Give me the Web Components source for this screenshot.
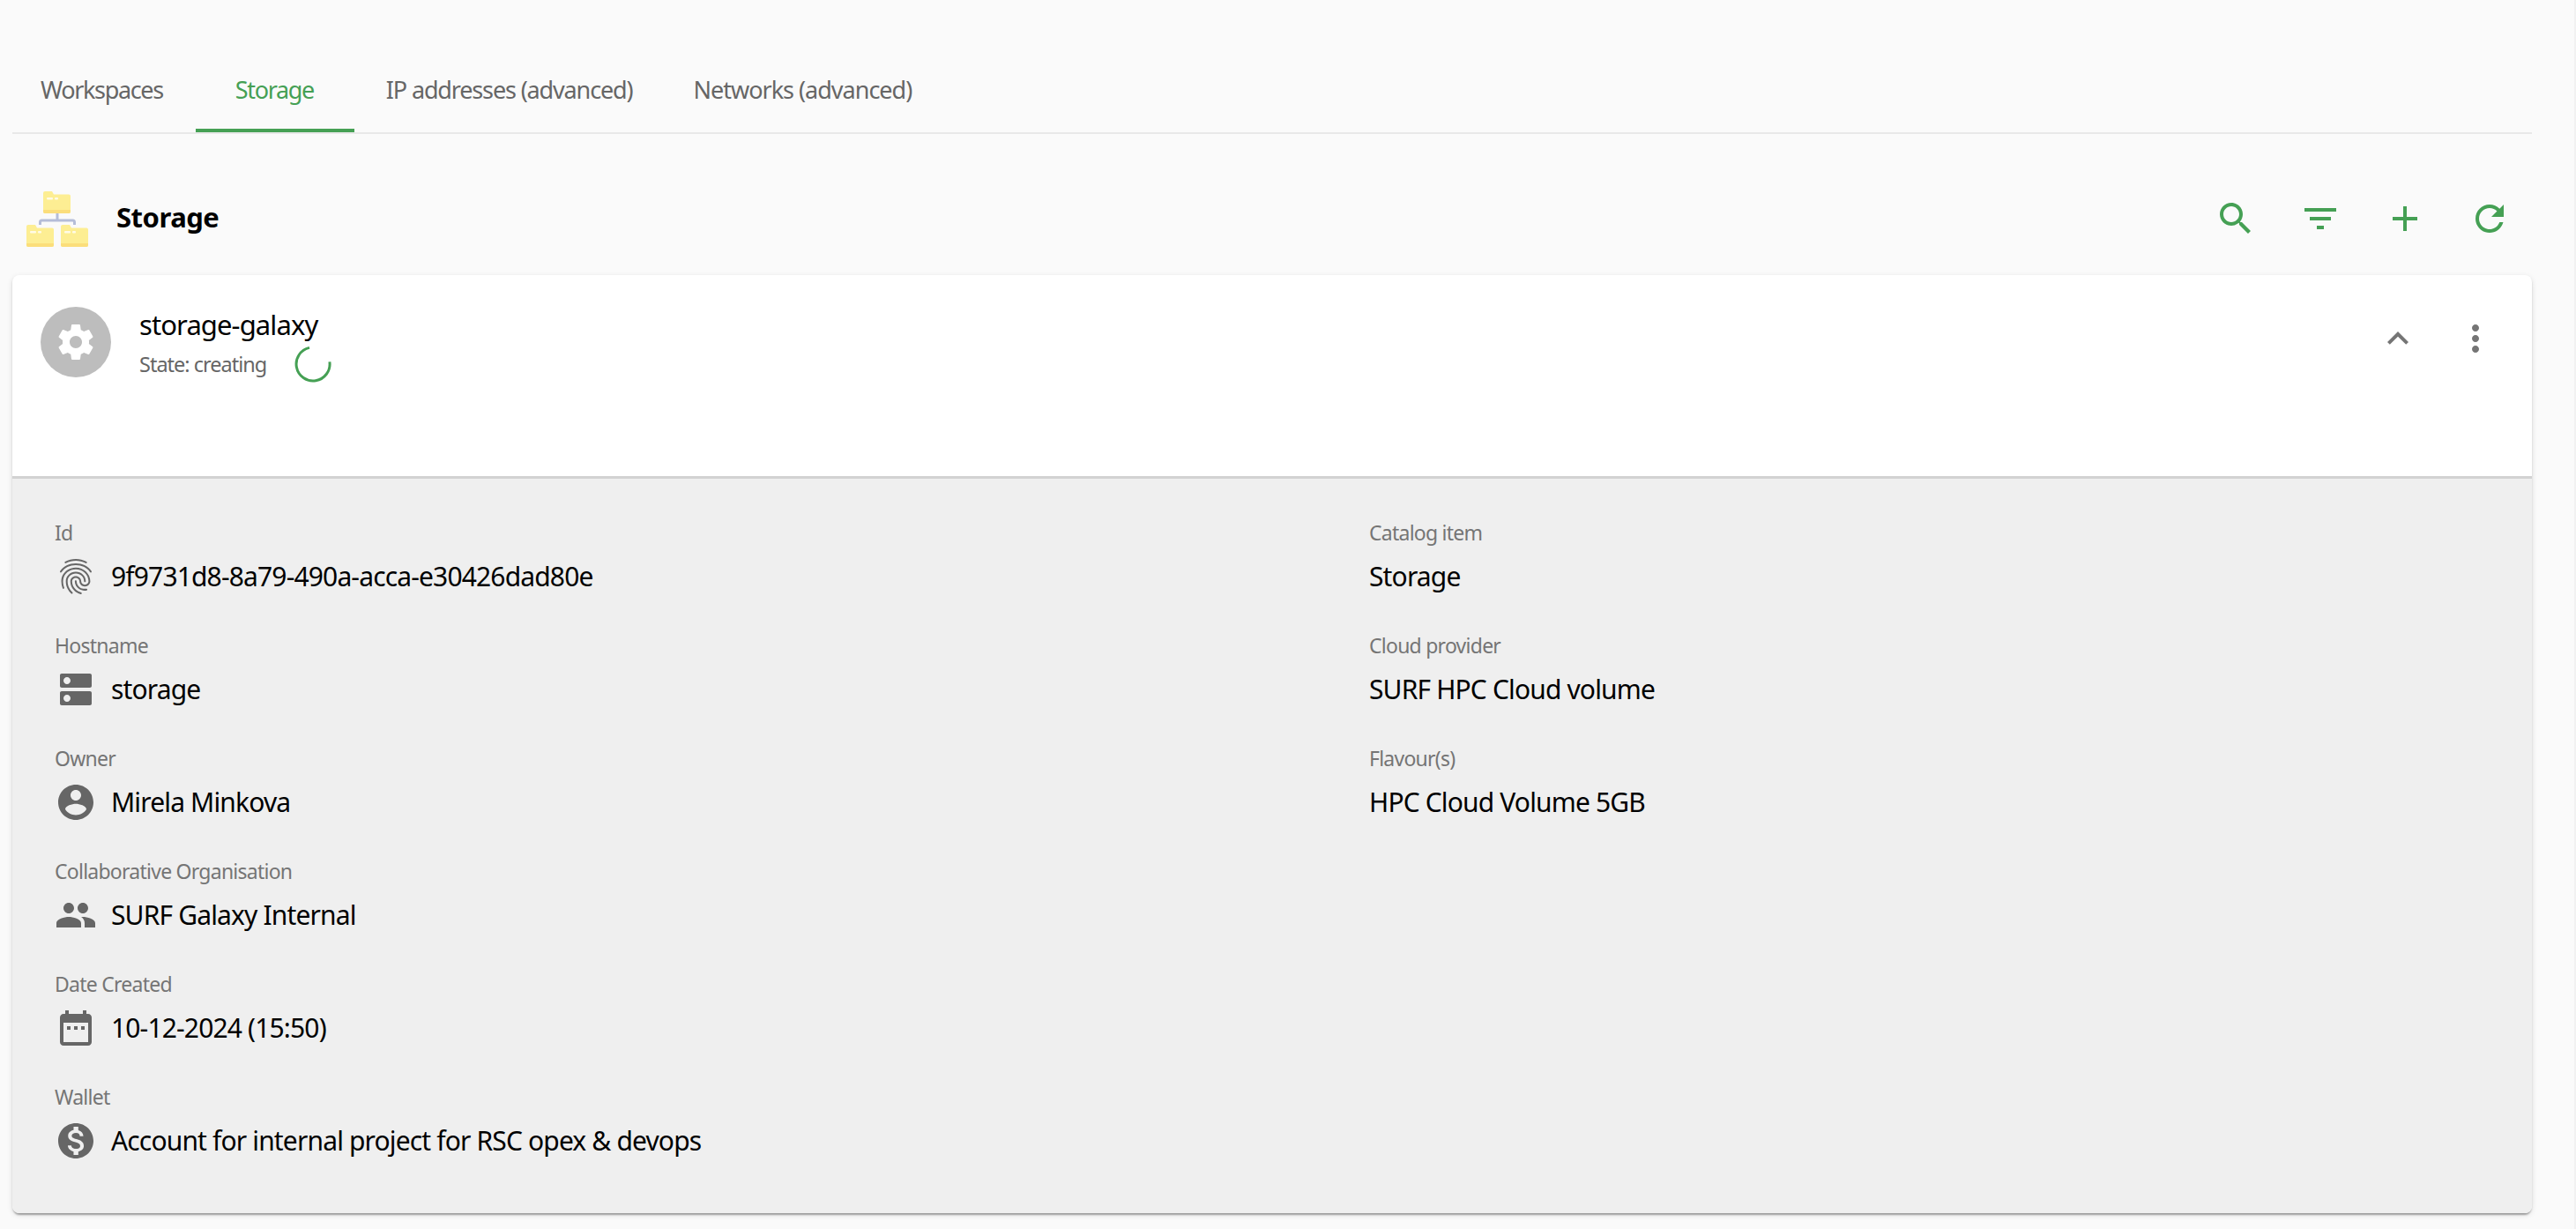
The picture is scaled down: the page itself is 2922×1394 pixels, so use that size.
<!DOCTYPE html>
<html lang="en">
<head>
<meta charset="utf-8">
<title>Storage</title>
<style>
  html, body { margin: 0; background: #fafafa; }
  body { font-family: "Noto Sans", "Liberation Sans", sans-serif; }
</style>
</head>
<body>
<app-page>
  <nav-tabs>
    <tab-item style="--pad-l:32px;--pad-r:37px">Workspaces</tab-item>
    <tab-item active style="--pad-l:45px;--pad-r:46px">Storage</tab-item>
    <tab-item style="--pad-l:36px;--pad-r:36px;--ls:-1.15px">IP addresses (advanced)</tab-item>
    <tab-item style="--pad-l:33px;--pad-r:33px;--ls:-1px">Networks (advanced)</tab-item>
  </nav-tabs>
  <section-header title="Storage"></section-header>
  <resource-card name="storage-galaxy" state="State: creating">
    <detail-field label="Id" icon="fingerprint">9f9731d8-8a79-490a-acca-e30426dad80e</detail-field>
    <detail-field label="Catalog item">Storage</detail-field>
    <detail-field label="Hostname" icon="dns">storage</detail-field>
    <detail-field label="Cloud provider">SURF HPC Cloud volume</detail-field>
    <detail-field label="Owner" icon="account">Mirela Minkova</detail-field>
    <detail-field label="Flavour(s)">HPC Cloud Volume 5GB</detail-field>
    <detail-field label="Collaborative Organisation" icon="people">SURF Galaxy Internal</detail-field>
    <span></span>
    <detail-field label="Date Created" icon="date">10-12-2024 (15:50)</detail-field>
    <span></span>
    <detail-field label="Wallet" icon="money">Account for internal project for RSC opex &amp; devops</detail-field>
  </resource-card>
</app-page>

<script>
(function () {
  'use strict';

  const GREEN = '#45a054';
  const ICONS = {
    search: 'M15.5 14h-.79l-.28-.27C15.41 12.59 16 11.11 16 9.5 16 5.91 13.09 3 9.5 3S3 5.91 3 9.5 5.91 16 9.5 16c1.61 0 3.09-.59 4.23-1.57l.27.28v.79l5 4.99L20.49 19l-4.99-5zm-6 0C7.01 14 5 11.99 5 9.5S7.01 5 9.5 5 14 7.01 14 9.5 11.99 14 9.5 14z',
    filter: 'M10 18h4v-2h-4v2zM3 6v2h18V6H3zm3 7h12v-2H6v2z',
    add: 'M19 13h-6v6h-2v-6H5v-2h6V5h2v6h6v2z',
    refresh: 'M17.65 6.35C16.2 4.9 14.21 4 12 4c-4.42 0-7.99 3.58-7.99 8s3.57 8 7.99 8c3.73 0 6.84-2.55 7.73-6h-2.08c-.82 2.33-3.04 4-5.65 4-3.31 0-6-2.69-6-6s2.69-6 6-6c1.66 0 3.14.69 4.22 1.78L13 11h7V4l-2.35 2.35z',
    less: 'M12 8l-6 6 1.41 1.41L12 10.83l4.59 4.58L18 14z',
    more: 'M12 8c1.1 0 2-.9 2-2s-.9-2-2-2-2 .9-2 2 .9 2 2 2zm0 2c-1.1 0-2 .9-2 2s.9 2 2 2 2-.9 2-2-.9-2-2-2zm0 6c-1.1 0-2 .9-2 2s.9 2 2 2 2-.9 2-2-.9-2-2-2z',
    settings: 'M19.43 12.98c.04-.32.07-.64.07-.98s-.03-.66-.07-.98l2.11-1.65c.19-.15.24-.42.12-.64l-2-3.46c-.12-.22-.39-.3-.61-.22l-2.49 1c-.52-.4-1.08-.73-1.69-.98l-.38-2.65C14.46 2.18 14.25 2 14 2h-4c-.25 0-.46.18-.49.42l-.38 2.65c-.61.25-1.17.59-1.69.98l-2.49-1c-.23-.09-.49 0-.61.22l-2 3.46c-.13.22-.07.49.12.64l2.11 1.65c-.04.32-.07.65-.07.98s.03.66.07.98l-2.11 1.65c-.19.15-.24.42-.12.64l2 3.46c.12.22.39.3.61.22l2.49-1c.52.4 1.08.73 1.69.98l.38 2.65c.03.24.24.42.49.42h4c.25 0 .46-.18.49-.42l.38-2.65c.61-.25 1.17-.59 1.69-.98l2.49 1c.23.09.49 0 .61-.22l2-3.46c.12-.22.07-.49-.12-.64l-2.11-1.65zM12 15.5c-1.93 0-3.5-1.57-3.5-3.5s1.57-3.5 3.5-3.5 3.5 1.57 3.5 3.5-1.57 3.5-3.5 3.5z',
    fingerprint: 'M17.81 4.47c-.08 0-.16-.02-.23-.06C15.66 3.42 14 3 12.01 3c-1.98 0-3.86.47-5.57 1.41-.24.13-.54.04-.68-.2-.13-.24-.04-.55.2-.68C7.82 2.52 9.86 2 12.01 2c2.13 0 3.99.47 6.03 1.52.25.13.34.43.21.67-.09.18-.26.28-.44.28zM3.5 9.72c-.1 0-.2-.03-.29-.09-.23-.16-.28-.47-.12-.7.99-1.4 2.25-2.5 3.75-3.27C9.98 4.04 14 4.03 17.15 5.65c1.5.77 2.76 1.86 3.75 3.25.16.22.11.54-.12.7-.23.16-.54.11-.7-.12-.9-1.26-2.04-2.25-3.39-2.94-2.87-1.47-6.54-1.47-9.4.01-1.36.7-2.5 1.7-3.4 2.96-.08.14-.23.21-.39.21zm6.25 12.07c-.13 0-.26-.05-.35-.15-.87-.87-1.34-1.43-2.01-2.64-.69-1.23-1.05-2.73-1.05-4.34 0-2.97 2.54-5.39 5.66-5.39s5.66 2.42 5.66 5.39c0 .28-.22.5-.5.5s-.5-.22-.5-.5c0-2.42-2.09-4.39-4.66-4.39-2.57 0-4.66 1.97-4.66 4.39 0 1.44.32 2.77.93 3.85.64 1.15 1.08 1.64 1.85 2.42.19.2.19.51 0 .71-.11.1-.24.15-.37.15zm7.17-1.85c-1.19 0-2.24-.3-3.1-.89-1.49-1.01-2.38-2.65-2.38-4.39 0-.28.22-.5.5-.5s.5.22.5.5c0 1.41.72 2.74 1.94 3.56.71.48 1.54.71 2.54.71.24 0 .64-.03 1.04-.1.27-.05.53.13.58.41.05.27-.13.53-.41.58-.57.11-1.07.12-1.21.12zM14.91 22c-.04 0-.09-.01-.13-.02-1.59-.44-2.63-1.03-3.72-2.1-1.4-1.39-2.17-3.24-2.17-5.22 0-1.62 1.38-2.94 3.08-2.94 1.7 0 3.08 1.32 3.08 2.94 0 1.07.93 1.94 2.08 1.94s2.08-.87 2.08-1.94c0-3.77-3.25-6.83-7.25-6.83-2.84 0-5.44 1.58-6.61 4.03-.39.81-.59 1.76-.59 2.8 0 .78.07 2.01.67 3.61.1.26-.03.55-.29.64-.26.1-.55-.04-.64-.29-.49-1.31-.73-2.61-.73-3.96 0-1.2.23-2.29.68-3.24 1.33-2.79 4.28-4.6 7.51-4.6 4.55 0 8.25 3.51 8.25 7.83 0 1.62-1.38 2.94-3.08 2.94s-3.08-1.32-3.08-2.94c0-1.07-.93-1.94-2.08-1.94s-2.08.87-2.08 1.94c0 1.71.66 3.31 1.87 4.51.95.94 1.86 1.46 3.27 1.85.27.07.42.35.35.61-.05.23-.26.38-.47.38z',
    dns: 'M20 13H4c-.55 0-1 .45-1 1v6c0 .55.45 1 1 1h16c.55 0 1-.45 1-1v-6c0-.55-.45-1-1-1zM7 19c-1.1 0-2-.9-2-2s.9-2 2-2 2 .9 2 2-.9 2-2 2zM20 3H4c-.55 0-1 .45-1 1v6c0 .55.45 1 1 1h16c.55 0 1-.45 1-1V4c0-.55-.45-1-1-1zM7 9c-1.1 0-2-.9-2-2s.9-2 2-2 2 .9 2 2-.9 2-2 2z',
    account: 'M12 2C6.48 2 2 6.48 2 12s4.48 10 10 10 10-4.48 10-10S17.52 2 12 2zm0 3c1.66 0 3 1.34 3 3s-1.34 3-3 3-3-1.34-3-3 1.34-3 3-3zm0 14.2c-2.5 0-4.71-1.28-6-3.22.03-1.99 4-3.08 6-3.08 1.99 0 5.97 1.09 6 3.08-1.29 1.94-3.5 3.22-6 3.22z',
    people: 'M16 11c1.66 0 2.99-1.34 2.99-3S17.66 5 16 5c-1.66 0-3 1.34-3 3s1.34 3 3 3zm-8 0c1.66 0 2.99-1.34 2.99-3S9.66 5 8 5C6.34 5 5 6.34 5 8s1.34 3 3 3zm0 2c-2.33 0-7 1.17-7 3.5V19h14v-2.5c0-2.33-4.67-3.5-7-3.5zm8 0c-.29 0-.62.02-.97.05 1.16.84 1.97 1.97 1.97 3.45V19h6v-2.5c0-2.33-4.67-3.5-7-3.5z',
    date: 'M9 11H7v2h2v-2zm4 0h-2v2h2v-2zm4 0h-2v2h2v-2zm2-7h-1V2h-2v2H8V2H6v2H5c-1.11 0-1.99.9-1.99 2L3 20c0 1.1.89 2 2 2h14c1.1 0 2-.9 2-2V6c0-1.1-.9-2-2-2zm0 16H5V9h14v11z',
    money: 'M12 2C6.48 2 2 6.48 2 12s4.48 10 10 10 10-4.48 10-10S17.52 2 12 2zm1.41 16.09V20h-2.67v-1.93c-1.71-.36-3.16-1.46-3.27-3.4h1.96c.1 1.05.82 1.87 2.65 1.87 1.96 0 2.4-.98 2.4-1.59 0-.83-.44-1.61-2.67-2.14-2.48-.6-4.18-1.62-4.18-3.67 0-1.72 1.39-2.84 3.11-3.21V4h2.67v1.95c1.86.45 2.79 1.86 2.85 3.39H14.3c-.05-1.11-.64-1.87-2.22-1.87-1.5 0-2.4.68-2.4 1.64 0 .84.65 1.39 2.67 1.91s4.18 1.39 4.18 3.91c-.01 1.83-1.38 2.83-3.12 3.16z'
  };

  function define(name, css, html) {
    customElements.define(name, class extends HTMLElement {
      connectedCallback() {
        if (this.shadowRoot) return;
        const root = this.attachShadow({ mode: 'open' });
        root.innerHTML = '<style>' + css + '</style>' + (typeof html === 'function' ? html(this) : html);
      }
    });
  }

  define('app-page',
    ':host{display:block;box-sizing:border-box;width:2922px;height:1394px;padding:54px 48px 0 14px;background:#fafafa;border-right:2px solid #f1f1f1;overflow:hidden}',
    '<slot></slot>');

  define('m-icon',
    ':host{display:block;width:48px;height:48px;flex:none;color:inherit} svg{display:block;width:48px;height:48px;fill:currentColor}',
    el => '<svg viewBox="0 0 24 24"><path d="' + ICONS[el.getAttribute('name')] + '"/></svg>');

  define('icon-button',
    ':host{display:flex;align-items:center;justify-content:center;flex:none;width:var(--w,96px);height:96px}',
    el => '<m-icon name="' + el.getAttribute('icon') + '"></m-icon>');

  define('nav-tabs',
    ':host{display:flex;height:96px;border-bottom:2px solid #e8e8e8}',
    '<slot></slot>');

  define('tab-item',
    `:host{display:flex;align-items:center;box-sizing:border-box;height:96px;padding:2px var(--pad-r) 0 var(--pad-l);
       font-size:27px;letter-spacing:var(--ls,-1.35px);color:#666;white-space:nowrap;border-bottom:4px solid transparent}
     :host([active]){color:${GREEN};border-bottom-color:${GREEN}}`,
    '<slot></slot>');

  define('section-header',
    `:host{display:flex;align-items:center;height:160px;box-sizing:border-box;padding:48px 0 16px 14px}
     svg{display:block;flex:none;width:74px;height:66px;margin-top:1px}
     h1{margin:0 0 4px 30px;flex:1;font-size:31px;font-weight:700;color:#000;letter-spacing:-.5px}
     .tools{display:flex;color:${GREEN}}`,
    el => `<svg viewBox="0 0 74 66">
        <defs><g id="f">
          <path d="M2 0h8l2 3.5h17a2 2 0 0 1 2 2V23a2 2 0 0 1-2 2H2a2 2 0 0 1-2-2V2a2 2 0 0 1 2-2z" fill="#fdee93"/>
          <path d="M0 21h31v2a2 2 0 0 1-2 2H2a2 2 0 0 1-2-2z" fill="#fbde7b"/>
          <rect x="4" y="7" width="7" height="2.6" rx="1" fill="#fffbe6"/><rect x="13" y="7" width="4" height="2.6" rx="1" fill="#fffbe6"/>
        </g></defs>
        <path d="M37 26v8M17.5 39v-3a2 2 0 0 1 2-2h35a2 2 0 0 1 2 2v3" fill="none" stroke="#b5bdd8" stroke-width="3"/>
        <use href="#f" x="21" y="1"/><use href="#f" x="2" y="39"/><use href="#f" x="41" y="39"/>
      </svg>
      <h1>${el.getAttribute('title')}</h1>
      <div class="tools">
        <icon-button icon="search"></icon-button><icon-button icon="filter"></icon-button>
        <icon-button icon="add"></icon-button><icon-button icon="refresh"></icon-button>
      </div>`);

  define('resource-card',
    `:host{display:block;border-radius:8px;background:#fff;
        box-shadow:0 4px 2px -2px rgba(0,0,0,.2),0 2px 2px 0 rgba(0,0,0,.14),0 2px 6px 0 rgba(0,0,0,.12)}
     .wrap{border-radius:8px;overflow:hidden}
     .head{display:flex;box-sizing:border-box;height:231px;padding:24px 20px 0 32px;border-bottom:3px solid #d2d2d2}
     .avatar{width:80px;height:80px;margin-top:12px;border-radius:50%;background:#bdbdbd;color:#fff;display:flex;align-items:center;justify-content:center;flex:none}
     .text{margin:8px 0 0 32px;flex:1}
     .name{font-size:31px;line-height:48px;color:#000;letter-spacing:-.9px}
     .state{display:flex;align-items:center;height:40px;margin-top:1px;font-size:23.5px;color:#666;letter-spacing:-1px}
     .state svg{display:block;margin-left:32px;width:42px;height:42px}
     .actions{display:flex;color:#757575;--w:88px}
     .details{display:grid;grid-template-columns:1491px 1fr;padding:41px 48px 58px;row-gap:34px;background:#efefef}`,
    el => `<div class="wrap">
      <div class="head">
        <div class="avatar"><m-icon name="settings"></m-icon></div>
        <div class="text">
          <div class="name">${el.getAttribute('name')}</div>
          <div class="state">${el.getAttribute('state')}
            <svg viewBox="0 0 42 42"><path d="M39.9 18.4A19 19 0 1 1 17 2.4" fill="none" stroke="${GREEN}" stroke-width="3"/></svg>
          </div>
        </div>
        <div class="actions"><icon-button icon="less"></icon-button><icon-button icon="more"></icon-button></div>
      </div>
      <div class="details"><slot></slot></div>
    </div>`);

  define('detail-field',
    `:host{display:block}
     .label{height:40px;line-height:40px;font-size:23px;color:#757575;letter-spacing:-.75px}
     .value{display:flex;align-items:center;gap:16px;height:48px;margin-top:6px;font-size:30px;color:#000;letter-spacing:-.85px}
     .value span{margin-bottom:2px}
     m-icon{color:#666}`,
    el => {
      const icon = el.getAttribute('icon');
      return `<div class="label">${el.getAttribute('label')}</div>
        <div class="value">${icon ? `<m-icon name="${icon}"></m-icon>` : ''}<span><slot></slot></span></div>`;
    });
}());
</script>
</body>
</html>
